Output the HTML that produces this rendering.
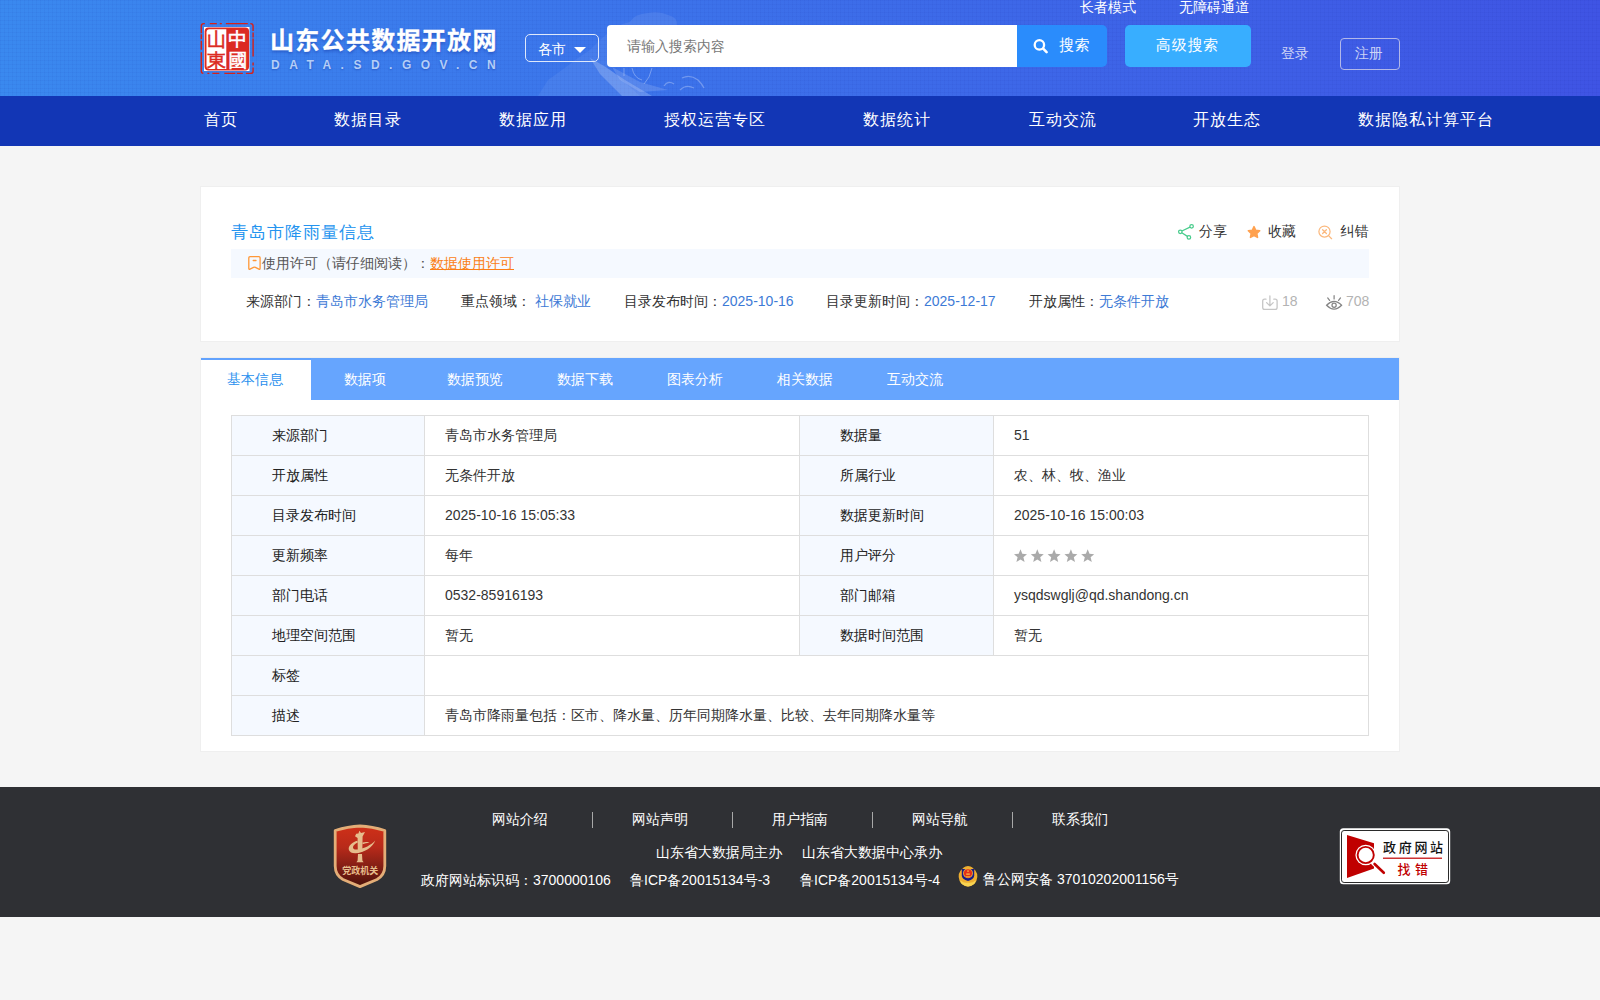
<!DOCTYPE html>
<html lang="zh-CN">
<head>
<meta charset="utf-8">
<title>青岛市降雨量信息 - 山东公共数据开放网</title>
<style>
*{box-sizing:border-box;margin:0;padding:0}
html,body{width:1600px;height:1000px;overflow:hidden}
body{background:#f5f5f5;font-family:"Liberation Sans","WenQuanYi Zen Hei Sharp","WenQuanYi Zen Hei","Noto Sans CJK SC",sans-serif;font-size:14px;color:#333;position:relative}
a{text-decoration:none;color:inherit}
.abs{position:absolute;white-space:nowrap}
/* header */
#hd{position:absolute;left:0;top:0;width:1600px;height:96px;background:linear-gradient(90deg,#3a89ef 0%,#3f54e4 100%);overflow:hidden}
#hd .dots{position:absolute;left:0;top:0;width:1600px;height:96px;background-image:linear-gradient(rgba(0,20,120,.035) 1px,transparent 1px),linear-gradient(90deg,rgba(0,20,120,.035) 1px,transparent 1px);background-size:4px 4px}
#nav{position:absolute;left:0;top:96px;width:1600px;height:50px;background:#1236b5}
#nav a{position:absolute;top:0;line-height:48px;color:#fff;font-size:16px;letter-spacing:1px;white-space:nowrap}
/* cards */
.card{position:absolute;left:200px;width:1200px;background:#fff;border:1px solid #efefef}
/* footer */
#ft{position:absolute;left:0;top:787px;width:1600px;height:130px;background:#2f3034;color:#fff}
#ft .abs{color:#fff;font-size:14px;line-height:16px}
#ft .sep{position:absolute;top:25px;width:1px;height:16px;background:#a8a8a8}
table{border-collapse:collapse}
</style>
</head>
<body>

<div id="hd">
  <div class="dots"></div>
  <!-- faint decorative illustration -->
  <svg class="abs" style="left:520px;top:0" width="240" height="96" viewBox="520 0 240 96">
    <path d="M538 96 L548 80 L562 70 L578 58 L590 50 L600 40 L607 34 V67 L640 96 Z" fill="#fff" opacity=".06"/>
    <path d="M630 22 Q634 14 648 13 Q660 11 668 15 Q678 17 677 26 H607 V34 Q612 26 630 22 Z" fill="#fff" opacity=".08"/>
    <path d="M590 58 L604 66 L625 80 L652 96 H622 L600 74 Z" fill="#fff" opacity=".2"/>
    <path d="M612 67 L640 82 L668 90 L640 92 L620 80 Z" fill="#fff" opacity=".14"/>
    <path d="M624 68 V76 M632 68 Q634 78 642 80 M652 68 Q650 78 644 84" fill="none" stroke="#fff" stroke-width="1" opacity=".3"/>
    <path d="M664 86 Q668 80 674 84 M680 90 Q686 84 694 88 M682 78 Q690 74 698 80 Q702 84 704 88" fill="none" stroke="#fff" stroke-width="1.300" opacity=".28"/>
  </svg>
  <!-- logo seal -->
  <svg class="abs" style="left:196px;top:18px" width="64" height="62" viewBox="196 18 64 62">
    <rect x="201.300" y="23.600" width="51.800" height="49.800" rx="2.500" fill="none" stroke="#d5211b" stroke-width="1.400" stroke-dasharray="7 3 2 4 22 2.500 9 1.500 5 1 18 6 3 2 12 3 6 1.500 11 5" stroke-dashoffset="-6"/>
    <rect x="204" y="27" width="45.500" height="44" fill="#fff"/>
    <rect x="204.600" y="27.500" width="44.500" height="43" rx="4" fill="#dc2a22"/>
    <path d="M209.500 29.300 H226.300 V69 H209.500 Q206.500 69 206.500 66 V32.300 Q206.500 29.300 209.500 29.300 Z" fill="#fff"/>
    <g font-family="Liberation Sans,WenQuanYi Zen Hei Sharp,WenQuanYi Zen Hei,sans-serif" font-size="19" text-anchor="middle" stroke-width=".55">
      <text x="216.400" y="46.300" fill="#dc2a22" stroke="#dc2a22">山</text>
      <text x="216.400" y="66.600" fill="#dc2a22" stroke="#dc2a22">東</text>
      <text x="237.800" y="46.300" fill="#fff" stroke="#fff">中</text>
      <text x="237.800" y="66.800" fill="#fff" stroke="#fff">國</text>
    </g>
  </svg>
  <div class="abs" id="sitename" style="left:270px;top:24px;font-size:24px;line-height:34px;letter-spacing:1.300px;font-weight:bold;color:#fff;font-family:'Liberation Sans','Noto Sans CJK SC',sans-serif;text-shadow:0 2px 3px rgba(20,50,160,.45);-webkit-text-stroke:.3px #fff">山东公共数据开放网</div>
  <div class="abs" id="siteurl" style="left:271px;top:57px;font-size:12px;line-height:16px;font-weight:bold;color:#b4cef7;letter-spacing:9.500px;text-shadow:0 1px 2px rgba(20,50,160,.45)">DATA.SD.GOV.CN</div>

  <div class="abs" style="left:525px;top:34px;width:74px;height:28px;border:1px solid #dfe9fb;border-radius:5px"></div>
  <div class="abs" style="left:538px;top:40px;font-size:14px;line-height:18px;color:#fff">各市</div>
  <div class="abs" style="left:574px;top:47px;width:0;height:0;border-left:6px solid transparent;border-right:6px solid transparent;border-top:6px solid #fff"></div>

  <div class="abs" style="left:607px;top:25px;width:412px;height:42px;background:#fff;border-radius:4px 0 0 4px"></div>
  <div class="abs" style="left:627px;top:37px;font-size:14px;line-height:18px;color:#777">请输入搜索内容</div>
  <div class="abs" style="left:1017px;top:25px;width:90px;height:42px;background:#2a8cfc;border-radius:0 5px 5px 0"></div>
  <svg class="abs" style="left:1032px;top:37px" width="18" height="18" viewBox="0 0 18 18"><circle cx="7.400" cy="7.900" r="4.700" fill="none" stroke="#fff" stroke-width="2.300"/><path d="M11.200 11.700 L14.600 15.100" stroke="#fff" stroke-width="2.600" stroke-linecap="round"/></svg>
  <div class="abs" style="left:1059px;top:35px;font-size:15px;line-height:20px;color:#fff;letter-spacing:.5px">搜索</div>
  <div class="abs" style="left:1125px;top:25px;width:126px;height:42px;background:#38aeff;border-radius:5px"></div>
  <div class="abs" style="left:1156px;top:35px;font-size:15px;line-height:20px;color:#fff;letter-spacing:.7px">高级搜索</div>

  <div class="abs" style="left:1080px;top:-1px;font-size:14px;line-height:16px;color:#fff">长者模式</div>
  <div class="abs" style="left:1179px;top:-1px;font-size:14px;line-height:16px;color:#fff">无障碍通道</div>
  <div class="abs" style="left:1281px;top:44px;font-size:14px;line-height:18px;color:#cdd4f6">登录</div>
  <div class="abs" style="left:1340px;top:38px;width:60px;height:32px;border:1px solid #b2b8ea;border-radius:4px"></div>
  <div class="abs" style="left:1355px;top:44px;font-size:14px;line-height:18px;color:#cdd4f6">注册</div>
</div>

<div id="nav">
  <a style="left:204px">首页</a>
  <a style="left:334px">数据目录</a>
  <a style="left:499px">数据应用</a>
  <a style="left:664px">授权运营专区</a>
  <a style="left:863px">数据统计</a>
  <a style="left:1029px">互动交流</a>
  <a style="left:1193px">开放生态</a>
  <a style="left:1358px">数据隐私计算平台</a>
</div>

<!-- card 1 -->
<div class="card" id="c1" style="top:186px;height:156px"></div>
<div class="abs" id="title" style="left:231px;top:222px;font-size:17px;line-height:22px;color:#2494ef;letter-spacing:1px">青岛市降雨量信息</div>

<svg class="abs" style="left:1176px;top:222px" width="20" height="20" viewBox="1176 222 20 20" fill="none" stroke="#48cc8c" stroke-width="1.250"><circle cx="1191.600" cy="226.300" r="1.750"/><circle cx="1180.300" cy="231.800" r="1.750"/><circle cx="1188.900" cy="237.400" r="1.750"/><path d="M1181.900 231 L1190 227.100 M1181.800 232.800 L1187.400 236.400"/></svg>
<div class="abs" style="left:1199px;top:222px;font-size:14px;line-height:18px;color:#333">分享</div>
<svg class="abs" style="left:1246px;top:224px" width="16" height="16" viewBox="1246 224 16 16"><path d="M1254 226.600 L1255.750 230.300 L1259.700 230.800 L1256.800 233.500 L1257.550 237.400 L1254 235.500 L1250.450 237.400 L1251.200 233.500 L1248.300 230.800 L1252.250 230.300 Z" fill="#ffa14f" stroke="#ffa14f" stroke-width="1.500" stroke-linejoin="round"/></svg>
<div class="abs" style="left:1268px;top:222px;font-size:14px;line-height:18px;color:#333">收藏</div>
<svg class="abs" style="left:1316px;top:223px" width="18" height="18" viewBox="1316 223 18 18" fill="none" stroke="#fbb87d" stroke-width="1.250" stroke-linecap="round"><circle cx="1324.500" cy="231.600" r="5.600"/><path d="M1322.600 229.700 L1326.400 233.500 M1326.400 229.700 L1322.600 233.500 M1328.800 235.900 L1331.600 238.700"/></svg>
<div class="abs" style="left:1340px;top:222px;font-size:14px;line-height:18px;color:#333;letter-spacing:.5px">纠错</div>

<div class="abs" style="left:231px;top:249px;width:1138px;height:29px;background:#f5f9ff"></div>
<svg class="abs" style="left:246px;top:254px" width="18" height="18" viewBox="246 254 18 18" fill="none" stroke="#ff9838" stroke-width="1.300" stroke-linecap="round" stroke-linejoin="round"><path d="M250 256.700 H259 Q260.100 256.700 260.100 257.800 V268.300 Q260.100 269.700 258.900 269.100 L255.400 267.300 Q254.450 266.800 253.500 267.300 L250 269.100 Q248.800 269.700 248.800 268.300 V257.800 Q248.800 256.700 250 256.700 Z M253.200 260.500 H256"/></svg>
<div class="abs" style="left:262px;top:254px;font-size:14px;line-height:18px;color:#555">使用许可（请仔细阅读）：<span style="color:#fb7f16;text-decoration:underline">数据使用许可</span></div>

<div class="abs meta" style="left:246px;top:292px;font-size:14px;line-height:18px;color:#333">来源部门：<span style="color:#3d7ad6">青岛市水务管理局</span></div>
<div class="abs meta" style="left:461px;top:292px;font-size:14px;line-height:18px;color:#333">重点领域： <span style="color:#3d7ad6">社保就业</span></div>
<div class="abs meta" style="left:624px;top:292px;font-size:14px;line-height:18px;color:#333">目录发布时间：<span style="color:#3d7ad6">2025-10-16</span></div>
<div class="abs meta" style="left:826px;top:292px;font-size:14px;line-height:18px;color:#333">目录更新时间：<span style="color:#3d7ad6">2025-12-17</span></div>
<div class="abs meta" style="left:1029px;top:292px;font-size:14px;line-height:18px;color:#333">开放属性：<span style="color:#3d7ad6">无条件开放</span></div>
<svg class="abs" style="left:1260px;top:293px" width="20" height="20" viewBox="1260 293 20 20" fill="none" stroke="#c6c6c6" stroke-width="1.300" stroke-linecap="round" stroke-linejoin="round"><path d="M1266 299.200 H1264.600 Q1262.700 299.200 1262.700 301.100 V307.500 Q1262.700 309.400 1264.600 309.400 H1275.200 Q1277.100 309.400 1277.100 307.500 V301.100 Q1277.100 299.200 1275.200 299.200 H1273.800 M1269.900 296 V305.600 M1266.600 302.600 L1269.900 305.900 L1273.200 302.600"/></svg>
<div class="abs" style="left:1282px;top:292px;font-size:14px;line-height:18px;color:#b3b3b3">18</div>
<svg class="abs" style="left:1324px;top:293px" width="20" height="20" viewBox="1324 293 20 20" fill="none" stroke="#858585" stroke-width="1.250" stroke-linecap="round"><path d="M1326.600 305.200 Q1334 297.400 1341.600 305.200 Q1334 313 1326.600 305.200 Z"/><circle cx="1334.100" cy="305.300" r="2.100"/><path d="M1327.700 297.900 L1329.600 300.400 M1334.100 295.700 V298.900 M1340.500 297.900 L1338.600 300.400"/></svg>
<div class="abs" style="left:1346px;top:292px;font-size:14px;line-height:18px;color:#b3b3b3">708</div>

<!-- card 2 -->
<div class="card" id="c2" style="top:357px;height:395px"></div>
<div class="abs" style="left:201px;top:358px;width:1198px;height:42px;background:#66a5fe"></div>
<div class="abs" style="left:201px;top:358px;width:110px;height:42px;background:#fff;border-top:2px solid #62a2fd"></div>
<div class="abs tab" style="left:227px;top:370px;font-size:14px;line-height:18px;color:#2a90ee">基本信息</div>
<div class="abs tab" style="left:344px;top:370px;font-size:14px;line-height:18px;color:#fff">数据项</div>
<div class="abs tab" style="left:447px;top:370px;font-size:14px;line-height:18px;color:#fff">数据预览</div>
<div class="abs tab" style="left:557px;top:370px;font-size:14px;line-height:18px;color:#fff">数据下载</div>
<div class="abs tab" style="left:667px;top:370px;font-size:14px;line-height:18px;color:#fff">图表分析</div>
<div class="abs tab" style="left:777px;top:370px;font-size:14px;line-height:18px;color:#fff">相关数据</div>
<div class="abs tab" style="left:887px;top:370px;font-size:14px;line-height:18px;color:#fff">互动交流</div>

<table class="abs" id="tb" style="left:231px;top:415px;width:1137px;table-layout:fixed">
<colgroup><col style="width:193px"><col style="width:375px"><col style="width:194px"><col style="width:375px"></colgroup>
<tr><th>来源部门</th><td>青岛市水务管理局</td><th>数据量</th><td>51</td></tr>
<tr><th>开放属性</th><td>无条件开放</td><th>所属行业</th><td>农、林、牧、渔业</td></tr>
<tr><th>目录发布时间</th><td>2025-10-16 15:05:33</td><th>数据更新时间</th><td>2025-10-16 15:00:03</td></tr>
<tr><th>更新频率</th><td>每年</td><th>用户评分</th><td><svg width="84" height="14" viewBox="0 0 84 14" style="display:block;margin-top:2px;margin-left:-0.500px"><path transform="translate(0.0 0)" d="M6.500 0.300 L8.300 4.800 L13 5.200 L9.400 8.300 L10.600 13 L6.500 10.400 L2.400 13 L3.600 8.300 L0 5.200 L4.700 4.800 Z" fill="#aaa"/><path transform="translate(16.8 0)" d="M6.500 0.300 L8.300 4.800 L13 5.200 L9.400 8.300 L10.600 13 L6.500 10.400 L2.400 13 L3.600 8.300 L0 5.200 L4.700 4.800 Z" fill="#aaa"/><path transform="translate(33.6 0)" d="M6.500 0.300 L8.300 4.800 L13 5.200 L9.400 8.300 L10.600 13 L6.500 10.400 L2.400 13 L3.600 8.300 L0 5.200 L4.700 4.800 Z" fill="#aaa"/><path transform="translate(50.4 0)" d="M6.500 0.300 L8.300 4.800 L13 5.200 L9.400 8.300 L10.600 13 L6.500 10.400 L2.400 13 L3.600 8.300 L0 5.200 L4.700 4.800 Z" fill="#aaa"/><path transform="translate(67.2 0)" d="M6.500 0.300 L8.300 4.800 L13 5.200 L9.400 8.300 L10.600 13 L6.500 10.400 L2.400 13 L3.600 8.300 L0 5.200 L4.700 4.800 Z" fill="#aaa"/></svg></td></tr>
<tr><th>部门电话</th><td>0532-85916193</td><th>部门邮箱</th><td>ysqdswglj@qd.shandong.cn</td></tr>
<tr><th>地理空间范围</th><td>暂无</td><th>数据时间范围</th><td>暂无</td></tr>
<tr><th>标签</th><td colspan="3"></td></tr>
<tr><th>描述</th><td colspan="3">青岛市降雨量包括：区市、降水量、历年同期降水量、比较、去年同期降水量等</td></tr>
</table>
<style>
#tb th,#tb td{border:1px solid #dedede;height:40px;font-size:14px;font-weight:normal;text-align:left;color:#333;padding:0 0 2px 0;line-height:18px;white-space:nowrap;vertical-align:middle}
#tb th{background:#f5f9ff;padding-left:40px;color:#222}
#tb td{padding-left:20px}
.stars{color:#bdbdbd;font-size:15px;letter-spacing:2px;font-family:"DejaVu Sans",sans-serif}
</style>

<!-- footer -->
<div id="ft">

  <!-- party/gov badge -->
  <svg class="abs" style="left:330px;top:34px" width="60" height="70" viewBox="330 821 60 70">
    <defs>
      <linearGradient id="bg1" x1="0" y1="0" x2="0" y2="1">
        <stop offset="0" stop-color="#cf3018"/><stop offset=".35" stop-color="#b82a1a"/><stop offset=".6" stop-color="#8e2116"/><stop offset=".8" stop-color="#6e1a10"/><stop offset="1" stop-color="#4a110b"/>
      </linearGradient>
    </defs>
    <path d="M360 826 Q372 826.500 384.800 830.500 V866 Q384.800 875 377 879.500 L360 886.600 L343 879.500 Q335.200 875 335.200 866 V830.500 Q348 826.500 360 826 Z" fill="url(#bg1)" stroke="#e3ad77" stroke-width="2.800" stroke-linejoin="round"/>
    <g fill="#e6bd8c">
      <path d="M357.600 838 L355 836.300 L356.200 833.800 L358.400 833.600 L359.400 830.800 L361 833 L365 832 L362.600 836.500 L362.300 852 H357.800 Z"/>
      <path d="M358 854 H362 L362.400 860.500 L363.600 862.300 H356.400 L357.600 860.500 Z"/>
      <path d="M375.200 840.600 C373.400 846.800 364 853.300 355.300 853.300 C348.200 853.300 346.800 847.800 351.200 844 C353.300 842.100 356 840.900 357.600 840.700 L357.600 842.700 C355.600 843.400 353.900 844.600 353.200 846.200 C352.300 848.600 354.200 849.900 357.600 849.500 C364.200 848.800 371.200 845.100 375.200 840.600 Z"/>
      <path d="M362.500 842.500 C365.500 841.500 368.500 841.800 369.500 843 C368 842.800 365 843.300 362.500 844.300 Z"/>
    </g>
    <text x="360.200" y="873.600" text-anchor="middle" font-size="9" font-weight="bold" fill="#e6bd8c" font-family="Liberation Sans,Noto Sans CJK SC,sans-serif">党政机关</text>
  </svg>

  <!-- police emblem -->
  <svg class="abs" style="left:957px;top:77px" width="22" height="24" viewBox="957 864 22 24">
    <path d="M968 865.900 Q970.800 865.900 972.300 867.400 L975.400 870.600 Q977.600 873.600 977.300 877 Q977 881 974.600 883.600 Q971.800 886.500 968 886.400 Q964.200 886.500 961.400 883.600 Q959 881 958.700 877 Q958.400 873.600 960.600 870.600 L963.700 867.400 Q965.200 865.900 968 865.900 Z" fill="#eeae30"/>
    <path d="M960.200 880.200 Q964 883.600 968 882.600 Q972 883.600 975.800 880.200 Q975.600 883 973.600 884.600 Q971 886.500 968 886.400 Q965 886.500 962.400 884.600 Q960.400 883 960.200 880.200 Z" fill="#f8d452"/>
    <path d="M961.800 868.900 H974.200 V875.600 Q974.200 879.600 968 881 Q961.800 879.600 961.800 875.600 Z" fill="#1a1c86"/>
    <circle cx="968" cy="873.300" r="4.900" fill="#f0b43a"/>
    <circle cx="968" cy="873.300" r="4.150" fill="#e62f18"/>
    <rect x="966.200" y="873.500" width="3.600" height="1.200" fill="#f6c84e"/>
    <rect x="965.400" y="876" width="5.200" height="1.100" fill="#f0902e"/>
    <rect x="967.300" y="870.400" width="1.400" height="1.400" fill="#f6c84e"/>
  </svg>

  <!-- gov site error report -->
  <svg class="abs" style="left:1338px;top:39px" width="114" height="60" viewBox="1338 826 114 60">
    <rect x="1339.800" y="828.200" width="110.400" height="56" rx="3.500" fill="#fff"/>
    <rect x="1341.500" y="830.500" width="107" height="52" rx="2.600" fill="none" stroke="#2a2a2a" stroke-width="1"/>
    <path d="M1347 835 L1374 843.300 V868.600 L1347 878 Z" fill="#c00000"/>
    <circle cx="1365.700" cy="855" r="10.300" fill="#fff"/>
    <path d="M1373.300 862.700 L1384 873" stroke="#fff" stroke-width="5" stroke-linecap="round"/>
    <circle cx="1365.700" cy="855" r="8.100" fill="#fff" stroke="#c00000" stroke-width="1.900"/>
    <path d="M1374.600 864 L1383.800 872.800" stroke="#c00000" stroke-width="2.600" stroke-linecap="round"/>
    <text x="1383" y="851.800" font-size="13" fill="#111" letter-spacing="2.700" font-family="Liberation Sans,Noto Sans CJK SC,sans-serif" font-weight="500">政府网站</text>
    <rect x="1383" y="857.600" width="59" height="1.200" fill="#c00000"/>
    <text x="1397.500" y="874.200" font-size="13" fill="#c00000" letter-spacing="4.500" font-family="Liberation Sans,Noto Sans CJK SC,sans-serif" font-weight="500">找错</text>
  </svg>
  <div class="abs" style="left:492px;top:24px">网站介绍</div>
  <div class="sep" style="left:592px"></div>
  <div class="abs" style="left:632px;top:24px">网站声明</div>
  <div class="sep" style="left:732px"></div>
  <div class="abs" style="left:772px;top:24px">用户指南</div>
  <div class="sep" style="left:872px"></div>
  <div class="abs" style="left:912px;top:24px">网站导航</div>
  <div class="sep" style="left:1012px"></div>
  <div class="abs" style="left:1052px;top:24px">联系我们</div>
  <div class="abs" style="left:656px;top:57px">山东省大数据局主办</div>
  <div class="abs" style="left:802px;top:57px">山东省大数据中心承办</div>
  <div class="abs" style="left:421px;top:85px">政府网站标识码：3700000106</div>
  <div class="abs" style="left:630px;top:85px">鲁ICP备20015134号-3</div>
  <div class="abs" style="left:800px;top:85px">鲁ICP备20015134号-4</div>
  <div class="abs" style="left:983px;top:84px">鲁公网安备 37010202001156号</div>
</div>

</body>
</html>
